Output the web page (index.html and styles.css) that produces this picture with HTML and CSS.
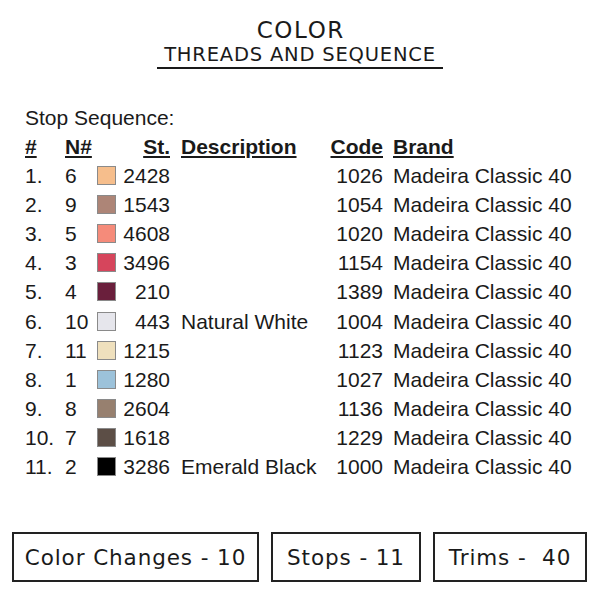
FILE: index.html
```html
<!DOCTYPE html>
<html>
<head>
<meta charset="utf-8">
<link rel="stylesheet" href="styles.css">
</head>
<body>
<div class="page">
  <header class="title">
    <div class="title-main">COLOR</div>
    <div class="title-sub">THREADS AND SEQUENCE</div>
  </header>
  <section class="seq">
    <div class="seq-label">Stop Sequence:</div>
    <div class="grid">
      <div class="h c1">#</div><div class="h c2">N#</div><div></div><div class="h c4">St.</div><div class="h c5">Description</div><div class="h c6">Code</div><div class="h c7">Brand</div>

      <div class="c1">1.</div><div class="c2">6</div><div class="sw" style="background:#f6be8c"></div><div class="c4">2428</div><div class="c5"></div><div class="c6">1026</div><div class="c7">Madeira Classic 40</div>
      <div class="c1">2.</div><div class="c2">9</div><div class="sw" style="background:#ad8577"></div><div class="c4">1543</div><div class="c5"></div><div class="c6">1054</div><div class="c7">Madeira Classic 40</div>
      <div class="c1">3.</div><div class="c2">5</div><div class="sw" style="background:#f58b7a"></div><div class="c4">4608</div><div class="c5"></div><div class="c6">1020</div><div class="c7">Madeira Classic 40</div>
      <div class="c1">4.</div><div class="c2">3</div><div class="sw" style="background:#d6455c"></div><div class="c4">3496</div><div class="c5"></div><div class="c6">1154</div><div class="c7">Madeira Classic 40</div>
      <div class="c1">5.</div><div class="c2">4</div><div class="sw" style="background:#6a1f3c"></div><div class="c4">210</div><div class="c5"></div><div class="c6">1389</div><div class="c7">Madeira Classic 40</div>
      <div class="c1">6.</div><div class="c2">10</div><div class="sw" style="background:#e6e6ec"></div><div class="c4">443</div><div class="c5">Natural White</div><div class="c6">1004</div><div class="c7">Madeira Classic 40</div>
      <div class="c1">7.</div><div class="c2">11</div><div class="sw" style="background:#efe0bd"></div><div class="c4">1215</div><div class="c5"></div><div class="c6">1123</div><div class="c7">Madeira Classic 40</div>
      <div class="c1">8.</div><div class="c2">1</div><div class="sw" style="background:#9cc2da"></div><div class="c4">1280</div><div class="c5"></div><div class="c6">1027</div><div class="c7">Madeira Classic 40</div>
      <div class="c1">9.</div><div class="c2">8</div><div class="sw" style="background:#97806f"></div><div class="c4">2604</div><div class="c5"></div><div class="c6">1136</div><div class="c7">Madeira Classic 40</div>
      <div class="c1">10.</div><div class="c2">7</div><div class="sw" style="background:#5c4e46"></div><div class="c4">1618</div><div class="c5"></div><div class="c6">1229</div><div class="c7">Madeira Classic 40</div>
      <div class="c1">11.</div><div class="c2">2</div><div class="sw" style="background:#000000"></div><div class="c4">3286</div><div class="c5">Emerald Black</div><div class="c6">1000</div><div class="c7">Madeira Classic 40</div>
    </div>
  </section>
  <footer class="stats">
    <div class="box box-1">Color Changes - 10</div>
    <div class="box box-2">Stops - 11</div>
    <div class="box box-3">Trims -&nbsp; 40</div>
  </footer>
</div>
</body>
</html>
```
FILE: styles.css
```css
html, body {
  margin: 0;
  padding: 0;
  background: #ffffff;
}
.page {
  width: 600px;
  height: 600px;
  position: relative;
  color: #1a1a1a;
}
.title {
  display: flex;
  flex-direction: column;
  align-items: center;
  padding-top: 17px;
  font-family: "DejaVu Sans", sans-serif;
}
.title-main {
  font-size: 23px;
  line-height: 26px;
  letter-spacing: 1.6px;
  padding-left: 1.6px;
}
.title-sub {
  font-size: 19.5px;
  line-height: 23px;
  letter-spacing: 0.8px;
  width: 286px;
  text-align: center;
  border-bottom: 2px solid #1a1a1a;
  padding-bottom: 1px;
}
.seq {
  padding-left: 25px;
  padding-top: 34px;
  font-family: "Liberation Sans", Arial, sans-serif;
  font-size: 21px;
}
.seq-label {
  line-height: 29px;
  height: 29px;
}
.grid {
  display: grid;
  grid-template-columns: 40px 32px 20px 53px 150px 63px auto;
  grid-template-rows: 29px;
  grid-auto-rows: 29.1px;
  align-items: center;
}
.grid > div {
  line-height: 29px;
  white-space: nowrap;
}
.h {
  font-weight: bold;
  text-decoration: underline;
  text-decoration-thickness: 2px;
  text-underline-offset: 2px;
}
.c4, .c6 { text-align: right; }
.c5 { padding-left: 11px; }
.c7 { padding-left: 10px; }
.grid > .sw {
  width: 17px;
  height: 17px;
  border: 1px solid #8a8a8a;
  line-height: 0;
}
.stats {
  position: absolute;
  left: 12px;
  top: 532px;
  display: flex;
  gap: 12px;
  font-family: "DejaVu Sans", sans-serif;
  font-size: 21.5px;
  letter-spacing: 0.9px;
}
.box {
  height: 46px;
  border: 2px solid #222;
  display: flex;
  align-items: center;
  justify-content: center;
}
.box-1 { width: 243px; }
.box-2 { width: 146px; }
.box-3 { width: 150px; }
```
